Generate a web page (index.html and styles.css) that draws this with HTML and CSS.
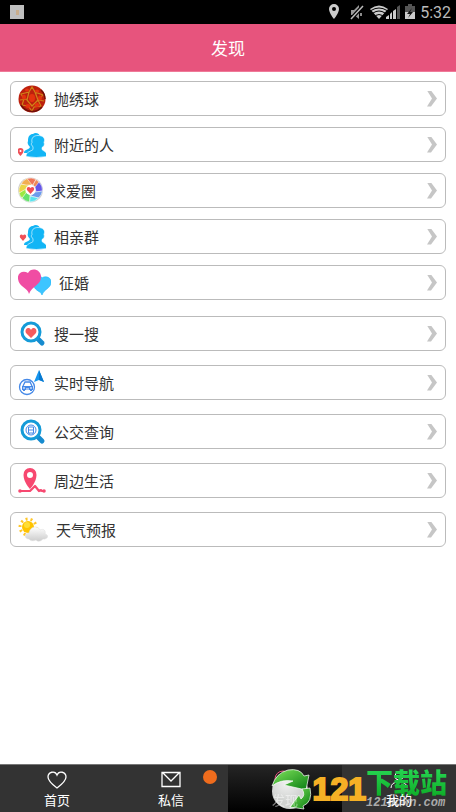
FILE: index.html
```html
<!DOCTYPE html>
<html lang="zh-CN">
<head>
  <meta charset="UTF-8">
  <title>发现</title>
  <meta name="viewport" content="width=device-width, initial-scale=1.0">
  <link rel="stylesheet" href="styles.css">
</head>
<body>
  <!-- Status bar -->
  <div class="status">
    <span class="notice"><i></i></span>
    <svg class="status-icons" width="92" height="20" viewBox="0 0 92 20">
      <path fill="#ccc" fill-rule="evenodd" d="M10 2a5 5 0 0 0-5 5c0 4 5 10 5 10s5-6 5-10a5 5 0 0 0-5-5zm0 3a2 2 0 1 1 0 4 2 2 0 0 1 0-4z"/>
      <path fill="#999" d="M27 8h3l5-5v14l-5-4h-3z"/>
      <path d="M27 17L39 4" stroke="#000" stroke-width="4"/>
      <path d="M27 17L39 4M37 11v3" stroke="#bbb" stroke-width="1.5"/>
      <path d="M46 7q9-7 18 0L55 17z" fill="#ccc"/>
      <path d="M47 8.500q8-5 16 0M49 11q6-4 12 0M51.500 13.500q3.500-2 7 0" fill="none" stroke="#000" stroke-width="1"/>
      <path fill="#ccc" d="M62 17v-2l3-2v4zM66 17v-5l2-2v7zM69 17V9l3-2v10z"/>
      <path fill="#555" d="M73 17V5l3-2v14z"/>
      <path fill="#555" d="M81 4h3V2h4v2h3v6H81z"/>
      <path fill="#ccc" d="M81 10h10v7H81z"/>
      <path fill="#111" d="M88 6l-5 6h3l-2 4 5-6h-3z"/>
    </svg>
    <time>5:32</time>
  </div>

  <header class="title-bar"><h1>发现</h1></header>

  <main>
    <nav class="list">
      <a href="#" class="item">
        <svg width="28" height="28" viewBox="0 0 28 28">
          <circle cx="14" cy="14" r="13.500" fill="#bd200d"/>
          <path d="M3 9l8-2 3-5 3 5 8 3-5 5 3 6-7 1-2 4-4-5-6-1 2-6zM11 7l-2 8 5 6 6-6-3-8M9 14l-7 1M20 15l6 1" fill="none" stroke="#cf8518" stroke-width="1.200"/>
          <g fill="#e5330f">
            <ellipse cx="14" cy="13" rx="3" ry="4"/>
            <ellipse cx="6" cy="12" rx="2" ry="2.500"/>
            <ellipse cx="22" cy="13" rx="2" ry="2.500"/>
            <ellipse cx="10" cy="21" rx="2.500" ry="2"/>
            <ellipse cx="19" cy="20" rx="2.500" ry="2"/>
            <ellipse cx="9" cy="5" rx="2" ry="1.500"/>
            <ellipse cx="19" cy="6" rx="2" ry="1.500"/>
          </g>
          <path d="M3 20a13 13 0 0 0 21 2M23 5a13 13 0 0 1 4 9" fill="none" stroke="#701008" stroke-width="1.500"/>
        </svg>
        <span>抛绣球</span>
      </a>
      <a href="#" class="item">
        <svg width="28" height="28" viewBox="0 0 28 28">
          <g id="people" fill="#12b5f5">
            <path d="M6 22c0-4 5-3 6-6-2-2-3-4-2-6 0-5 2-7 5-7 2-2 7-1 7 3v10l-9 6z"/>
            <path stroke="#fff" stroke-width=".6" d="M8 25.500c0-5 5-5 7-7v-3c-2-1-2-3-1-4-1-5 2-7 6-7s8 2 6 7c1 2 0 4-2 5v2c2 2 5 2 5 7q-11 2-21 0z"/>
          </g>
          <path fill="#ee5058" fill-rule="evenodd" d="M2.500 17a3 3 0 0 0-3 3c0 2 3 5 3 5s3-3 3-5a3 3 0 0 0-3-3zm0 2a1 1 0 1 1 0 2 1 1 0 0 1 0-2z"/>
        </svg>
        <span>附近的人</span>
      </a>
      <a href="#" class="item">
        <svg width="25" height="28" viewBox="0 0 25 28">
          <circle cx="12.500" cy="13" r="12.500" fill="#ccc"/>
          <g stroke="#fff" stroke-width=".5">
            <path fill="#ef7656" d="M9 1.500A12 12 0 0 1 18 2.500L15 8 9 7z"/>
            <path fill="#f08a55" d="M18 2.500l3 2.500-1 8-5-5z"/>
            <path fill="#6455e8" d="M21 5a12 12 0 0 1 3.500 9L18 15l-1-5z"/>
            <path fill="#6d9cec" d="M24.500 14a12 12 0 0 1-4 7l-8-2 5-4z"/>
            <path fill="#59e3ee" d="M20.500 21a12 12 0 0 1-9 4L12 19z"/>
            <path fill="#64e36b" d="M11.500 25A12 12 0 0 1 4 21l4-6 4 3z"/>
            <path fill="#9be842" d="M4 21a12 12 0 0 1-3-5l7-5v5z"/>
            <path fill="#ead547" d="M1 16a12 12 0 0 1 2-9l9 1-4 4z"/>
            <path fill="#f2ae51" d="M3 7a12 12 0 0 1 6-5.500L14 8H8z"/>
          </g>
          <circle cx="12.500" cy="13" r="5" fill="#fff"/>
          <path fill="#f24e55" d="M12.500 17L9 13c-1-3 2-4 3.500-2 1.500-2 4.500-1 3.500 2z"/>
        </svg>
        <span>求爱圈</span>
      </a>
      <a href="#" class="item">
        <svg width="28" height="28" viewBox="0 0 28 28">
          <use href="#people"/>
          <path fill="#f05058" d="M5 18L2 14.500c-1-3 2-4 3-2 1-2 4-1 3 2z"/>
        </svg>
        <span>相亲群</span>
      </a>
      <a href="#" class="item">
        <svg width="33" height="28" viewBox="0 0 33 28">
          <path fill="#3dc5ff" stroke="#17b4f8" stroke-width=".6" d="M24 26c-1-4-7-4-8-9V8c2-3 7-2 8 1 4-3 10 0 9 5-1 6-7 6-9 12z"/>
          <path fill="#f04da3" d="M11 25C10 19 1 18 0 10-1 4 5 1 10 4c3-6 13-4 13 4 0 8-9 9-12 17z"/>
        </svg>
        <span>征婚</span>
      </a>
    </nav>

    <nav class="list loose">
      <a href="#" class="item">
        <svg width="28" height="28" viewBox="0 0 28 28">
          <path d="M19 18l5 5" stroke="#168bcf" stroke-width="5" stroke-linecap="round"/>
          <circle cx="13" cy="12" r="9" fill="#fff" stroke="#159bd8" stroke-width="3"/>
          <path fill="#f45b5d" d="M13 18l-5-5c-2-4 3-7 5-3 2-4 7-1 5 3z"/>
        </svg>
        <span>搜一搜</span>
      </a>
      <a href="#" class="item">
        <svg width="28" height="28" viewBox="0 0 28 28">
          <path fill="#1595ee" d="M21 1l5 12-5-2-5 2z"/>
          <path fill="#0879cf" d="M21 1l5 12-5-2z"/>
          <circle cx="9" cy="18" r="7.500" fill="none" stroke="#4589e8" stroke-width="1.300"/>
          <path d="M5 17l2-4h5l2 4" fill="none" stroke="#4589e8" stroke-width="1.300"/>
          <path d="M4 17h11v4h-1v1h-2v-1H7v1H5v-1H4z" fill="#4589e8"/>
          <path d="M5 19h2M12 19h2M8 20h3" stroke="#fff"/>
        </svg>
        <span>实时导航</span>
      </a>
      <a href="#" class="item">
        <svg width="28" height="28" viewBox="0 0 28 28">
          <path d="M19 18l5 5" stroke="#168bcf" stroke-width="5" stroke-linecap="round"/>
          <circle cx="13" cy="12" r="9" fill="#fff" stroke="#159bd8" stroke-width="3"/>
          <circle cx="13" cy="12" r="5" fill="none" stroke="#4589e8"/>
          <path d="M10.500 9h5v6h-5zM10 12h6M11 15v1M15 15v1" fill="none" stroke="#4589e8"/>
        </svg>
        <span>公交查询</span>
      </a>
      <a href="#" class="item">
        <svg width="28" height="28" viewBox="0 0 28 28">
          <path d="M2 24h10l5-5 4 5 2-1 1 1h2" fill="none" stroke="#f74870" stroke-width="2.200" stroke-linejoin="round"/>
          <circle cx="2" cy="24" r="1.800" fill="#f74870"/>
          <circle cx="26" cy="24" r="1.800" fill="#f74870"/>
          <path fill="#f74870" fill-rule="evenodd" d="M12 1a6.500 6.500 0 0 0-6.500 7c0 7 6.500 14 6.500 14s6.500-7 6.500-14A6.500 6.500 0 0 0 12 1zm0 4a3 3 0 1 1 0 6 3 3 0 0 1 0-6z"/>
        </svg>
        <span>周边生活</span>
      </a>
      <a href="#" class="item">
        <svg width="30" height="28" viewBox="0 0 30 28">
          <defs>
            <linearGradient id="cloud" x2="0" y2="1"><stop stop-color="#fff"/><stop offset="1" stop-color="#ccc"/></linearGradient>
          </defs>
          <circle cx="10" cy="11" r="8" fill="none" stroke="#ffc629" stroke-width="3" stroke-dasharray="2 3"/>
          <circle cx="10" cy="11" r="6" fill="#ffc400"/>
          <circle cx="9" cy="9" r="3" fill="#ffdd35"/>
          <path fill="url(#cloud)" stroke="#ddd" stroke-width=".5" d="M11 23c-5 0-5-6 0-6 1-7 9-8 11-3 4-2 6 1 5 4 5 1 2 6-2 5q-4 4-7 1-5 2-7-1z"/>
        </svg>
        <span>天气预报</span>
      </a>
    </nav>
  </main>

  <!-- Bottom tabs -->
  <nav class="tabs">
    <a href="#" class="tab">
      <svg width="22" height="20" viewBox="0 0 22 20"><path d="M11 18C7 15 2 11 2 7c0-5 7-7 9-2 2-5 9-3 9 2 0 4-5 8-9 11z" fill="none" stroke="#fff" stroke-width="1.300"/></svg>
      <span>首页</span>
    </a>
    <a href="#" class="tab">
      <svg width="22" height="20" viewBox="0 0 22 20"><path d="M2 2.500h18v14H2zM3 3l8 8 8-8" fill="none" stroke="#fff" stroke-width="1.300"/></svg>
      <span>私信</span>
      <i class="dot"></i>
    </a>
    <a href="#" class="tab active">
      <svg width="22" height="20" viewBox="0 0 22 20"><circle cx="9" cy="9" r="8" fill="none" stroke="#e5547e"/></svg>
      <span>发现</span>
    </a>
    <a href="#" class="tab">
      <svg width="22" height="20" viewBox="0 0 22 20"><path d="M3 18q0-6 8-6t8 6M7 6a4 4 0 1 1 8 0 4 4 0 0 1-8 0" fill="none" stroke="#fff"/></svg>
      <span>我的</span>
    </a>
    <div class="brand">
      <svg width="42" height="42" viewBox="0 0 42 42">
        <defs>
          <linearGradient id="leaf" x2="1" y2="1"><stop stop-color="#81e45c"/><stop offset="1" stop-color="#087d12"/></linearGradient>
          <radialGradient id="ball" cx=".4" cy=".3"><stop stop-color="#f0f0f0"/><stop offset="1" stop-color="#d0d2d0"/></radialGradient>
        </defs>
        <circle cx="19" cy="23" r="18" fill="url(#ball)"/>
        <path fill="url(#leaf)" stroke="#fff" stroke-width=".7" d="M1 18Q5 5 17 2q12-2 16 6l5-1-3 15-22-5 9-4Q10 11 1 18z"/>
        <path fill="url(#leaf)" stroke="#fff" stroke-width=".7" d="M39 20q3 14-7 18l1 3-14-2 9-12 2 4q5-4 1-10z"/>
      </svg>
      <b class="brand-num">121</b>
      <div class="brand-text">
        <b>下载站</b>
        <small>121down.com</small>
      </div>
    </div>
  </nav>
</body>
</html>
```
FILE: styles.css
```css
* {
  box-sizing: border-box;
  margin: 0;
  padding: 0;
}

body {
  background: #fff;
  color: #333;
  font-family: "Noto Sans CJK SC", sans-serif;
  min-height: 100vh;
  display: flex;
  flex-direction: column;
}

a {
  color: inherit;
  text-decoration: none;
}

/* Top of screen */
.status {
  background: #000;
  height: 24px;
  padding: 0 5px 0 10px;
  display: flex;
  align-items: center;
  gap: 4px;
}

.notice {
  width: 14px;
  height: 14px;
  background: #bfbfbf;
  display: flex;
  align-items: center;
  justify-content: center;
}

.notice i {
  width: 3px;
  height: 5px;
  background: #c9ad8c;
}

.status-icons {
  margin-left: auto;
}

.status time {
  color: #bbb;
  font: 16px/24px Roboto, sans-serif;
  padding-top: 2px;
}

.title-bar {
  background: #e7547d;
  height: 48px;
  border-bottom: 1px solid #ef7a98;
}

h1 {
  color: #fff;
  font-size: 17px;
  font-weight: 400;
  line-height: 48px;
  text-align: center;
}

/* Menu rows */
main {
  flex: 1;
  padding: 9px 10px;
}

.list {
  display: flex;
  flex-direction: column;
  gap: 11px;
}

.loose {
  margin-top: 16px;
  gap: 14px;
}

.item {
  height: 35px;
  border: 1px solid #bbb;
  border-radius: 6px;
  padding: 0 8px 0 7px;
  display: flex;
  align-items: center;
  gap: 8px;
  font-size: 15px;
}

.item::after {
  content: "";
  width: 10px;
  height: 16px;
  margin-left: auto;
  background: #c6c6c6;
  clip-path: polygon(0 0, 40% 0, 100% 50%, 40% 100%, 0 100%, 50% 50%);
}

/* Bottom tabs */
.tabs {
  position: relative;
  display: flex;
  height: 48px;
  background: #333;
  border-top: 1px solid #777;
  color: #fff;
}

.tab {
  flex: 1;
  padding-top: 5px;
  display: flex;
  flex-direction: column;
  align-items: center;
  font-size: 13px;
  line-height: 19px;
}

.tab:nth-child(2) {
  position: relative;
}

.tab span {
  position: relative;
  z-index: 1;
}

.active {
  background: linear-gradient(#252525, #000);
}

.active span {
  opacity: .5;
}

.dot {
  position: absolute;
  top: 5px;
  right: 11px;
  width: 14px;
  height: 14px;
  border-radius: 50%;
  background: #ef6c1d;
}

/* Site logo over the tabs */
.brand {
  position: absolute;
  right: 9px;
  bottom: 0;
  height: 46px;
  display: flex;
  align-items: center;
}

.brand-num {
  font: bold 32px/46px "Liberation Sans", sans-serif;
  color: #f5b025;
  -webkit-text-stroke: 2px #f5b025;
}

.brand-text {
  display: flex;
  flex-direction: column;
}

.brand-text b {
  font-size: 27px;
  font-weight: 900;
  line-height: 28px;
  color: transparent;
  background: linear-gradient(#27d653, #0fae28);
  background-clip: text;
}

.brand-text small {
  font: italic bold 12px/14px "Liberation Mono", monospace;
  color: #aaa;
}
```
